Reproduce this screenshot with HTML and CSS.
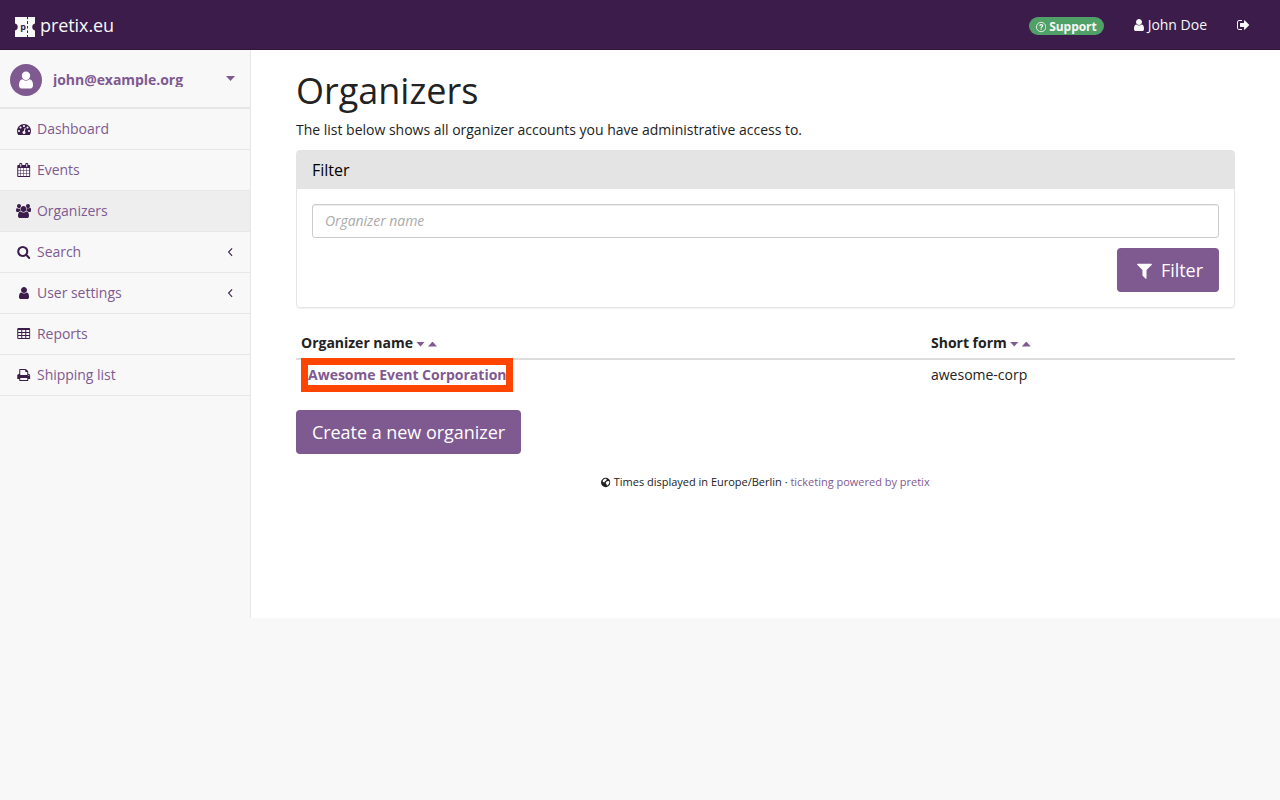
FILE: index.html
```html
<!DOCTYPE html>
<html lang="en">
<head>
<meta charset="utf-8">
<title>Organizers</title>
<link rel="stylesheet" href="styles.css">
</head>
<body>
<svg class="defs" width="0" height="0" aria-hidden="true">
  <symbol id="user" viewBox="256 0 1280 1792"><path d="M1536 1399q0 109-62.5 187t-150.5 78h-854q-88 0-150.500-78t-62.500-187q0-85 8.500-160.500t31.500-152 58.500-131 94-89 134.500-34.500q131 128 313 128t313-128q76 0 134.500 34.500t94 89 58.500 131 31.500 152 8.500 160.500zm-256-887q0 159-112.500 271.500t-271.500 112.500-271.500-112.500-112.500-271.500 112.500-271.500 271.500-112.500 271.500 112.500 112.500 271.500z"/></symbol>
  <symbol id="sign-out" viewBox="64 0 1664 1792"><path d="M704 1440q0 4 1 20t.5 26.500-3 23.500-10 19.500-20.500 6.500h-320q-119 0-203.500-84.500t-84.500-203.500v-704q0-119 84.500-203.500t203.500-84.500h320q13 0 22.500 9.500t9.500 22.500q0 4 1 20t.5 26.500-3 23.500-10 19.500-20.500 6.500h-320q-66 0-113 47t-47 113v704q0 66 47 113t113 47h312l11.500 1 11.500 3 8 5.500 7 9 2 13.500zm928-544q0 26-19 45l-544 544q-19 19-45 19t-45-19-19-45v-288h-448q-26 0-45-19t-19-45v-384q0-26 19-45t45-19h448v-288q0-26 19-45t45-19 45 19l544 544q19 19 19 45z"/></symbol>
  <symbol id="help" viewBox="0 0 1536 1792"><circle cx="768" cy="896" r="704" fill="none" stroke="currentColor" stroke-width="128"/><path d="M540 720q70-170 240-170 220 0 220 170 0 90-110 150-120 65-120 150v30" fill="none" stroke="currentColor" stroke-width="170"/><path d="M680 1130h180v190h-180z"/></symbol>
  <symbol id="dashboard" viewBox="0 0 1792 1792"><path d="M384 1152q0-53-37.500-90.500t-90.500-37.500-90.500 37.500-37.500 90.500 37.500 90.500 90.500 37.500 90.500-37.500 37.500-90.500zm192-448q0-53-37.500-90.500t-90.500-37.500-90.500 37.500-37.500 90.500 37.500 90.500 90.500 37.500 90.500-37.500 37.500-90.500zm428 481l101-382q6-26-7.500-48.500t-38.500-29.500-48 6.500-30 39.500l-101 382q-60 5-107 43.500t-63 98.500q-20 77 20 146t117 89 146-20 89-117q16-60-6-117t-72-91zm660-33q0-53-37.500-90.500t-90.500-37.500-90.500 37.500-37.500 90.500 37.500 90.500 90.500 37.500 90.500-37.500 37.500-90.500zm-640-640q0-53-37.500-90.500t-90.500-37.500-90.500 37.500-37.500 90.500 37.500 90.500 90.500 37.500 90.500-37.500 37.500-90.500zm448 192q0-53-37.500-90.500t-90.500-37.500-90.500 37.500-37.500 90.500 37.500 90.500 90.500 37.500 90.500-37.500 37.500-90.500zm320 448q0 261-141 483-19 29-54 29h-1402q-35 0-54-29-141-221-141-483 0-182 71-348t191-286 286-191 348-71 348 71 286 191 191 286 71 348z"/></symbol>
  <symbol id="calendar" viewBox="64 0 1664 1792"><path d="M192 1664h288v-288h-288v288zm352 0h320v-288h-320v288zm-352-352h288v-320h-288v320zm352 0h320v-320h-320v320zm-352-384h288v-288h-288v288zm736 736h320v-288h-320v288zm-384-736h320v-288h-320v288zm768 736h288v-288h-288v288zm-384-352h320v-320h-320v320zm-352-864v-288q0-13-9.500-22.500t-22.500-9.500h-64q-13 0-22.500 9.500t-9.500 22.500v288q0 13 9.500 22.500t22.500 9.500h64q13 0 22.500-9.500t9.500-22.500zm736 864h288v-320h-288v320zm-384-384h320v-288h-320v288zm384 0h288v-288h-288v288zm32-480v-288q0-13-9.500-22.500t-22.500-9.500h-64q-13 0-22.500 9.500t-9.500 22.500v288q0 13 9.500 22.500t22.500 9.500h64q13 0 22.500-9.500t9.500-22.500zm384-64v1280q0 52-38 90t-90 38h-1408q-52 0-90-38t-38-90v-1280q0-52 38-90t90-38h128v-96q0-66 47-113t113-47h64q66 0 113 47t47 113v96h384v-96q0-66 47-113t113-47h64q66 0 113 47t47 113v96h128q52 0 90 38t38 90z"/></symbol>
  <symbol id="group" viewBox="0 0 1920 1792"><path d="M593 896q-162 5-265 128h-134q-82 0-138-40.500t-56-118.500q0-353 124-353 6 0 43.500 21t97.500 42.500 119 21.500q67 0 133-23-5 37-5 66 0 159 81 256zm1071 637q0 120-73 189.500t-194 69.500h-874q-121 0-194-69.500t-73-189.500q0-53 3.500-103.500t14-109 26.500-108.500 43-97.500 62-81 85.500-53.500 111.500-20q10 0 43 21.500t73 48 107 48 135 21.500 135-21.500 107-48 73-48 43-21.500q61 0 111.500 20t85.500 53.500 62 81 43 97.500 26.500 108.500 14 109 3.500 103.500zm-1024-1277q0 106-75 181t-181 75-181-75-75-181 75-181 181-75 181 75 75 181zm704 384q0 159-112.500 271.500t-271.500 112.500-271.500-112.500-112.500-271.500 112.500-271.500 271.500-112.500 271.500 112.500 112.500 271.500zm576 225q0 78-56 118.500t-138 40.500h-134q-103-123-265-128 93-135 93-294 0-29-5-66 66 23 133 23 59 0 119-21.500t97.500-42.500 43.500-21q124 0 124 353zm-128-609q0 106-75 181t-181 75-181-75-75-181 75-181 181-75 181 75 75 181z"/></symbol>
  <symbol id="search" viewBox="64 0 1664 1792"><path d="M1216 832q0-185-131.500-316.500t-316.500-131.500-316.500 131.500-131.500 316.500 131.500 316.500 316.500 131.500 316.500-131.500 131.500-316.500zm512 832q0 52-38 90t-90 38q-54 0-90-38l-343-342q-179 124-399 124-143 0-273.500-55.500t-225-150-150-225-55.500-273.500 55.500-273.500 150-225 225-150 273.500-55.500 273.500 55.500 225 150 150 225 55.500 273.500q0 220-124 399l343 343q37 37 37 90z"/></symbol>
  <symbol id="table" viewBox="64 0 1664 1792"><path fill-rule="evenodd" d="M224 128h1344q160 0 160 160v1088q0 160-160 160h-1344q-160 0-160-160v-1088q0-160 160-160zM192 384v256h384v-256zM704 384v256h384v-256zM1216 384v256h384v-256zM192 768v256h384v-256zM704 768v256h384v-256zM1216 768v256h384v-256zM192 1152v256h384v-256zM704 1152v256h384v-256zM1216 1152v256h384v-256z"/></symbol>
  <symbol id="print" viewBox="64 0 1664 1792"><path d="M448 1536h896v-256h-896v256zm0-640h896v-384h-160q-40 0-68-28t-28-68v-160h-640v640zm1152 64q0-26-19-45t-45-19-45 19-19 45 19 45 45 19 45-19 19-45zm128 0v416q0 13-9.500 22.500t-22.500 9.500h-224v160q0 40-28 68t-68 28h-960q-40 0-68-28t-28-68v-160h-224q-13 0-22.500-9.500t-9.500-22.500v-416q0-79 56.500-135.500t135.500-56.500h64v-544q0-40 28-68t68-28h672q40 0 88 20t76 48l152 152q28 28 48 76t20 88v256h64q79 0 135.500 56.500t56.500 135.500z"/></symbol>
  <symbol id="angle" viewBox="0 0 14 14"><path d="M9.100 3.300 5.600 7.100l3.500 3.800" fill="none" stroke="currentColor" stroke-width="1.100"/></symbol>
  <symbol id="filter" viewBox="192 0 1408 1792"><path d="M1595 295q17 41-14 70l-493 493v742q0 42-39 59-13 5-25 5-27 0-45-19l-256-256q-19-19-19-45v-486l-493-493q-31-29-14-70 17-39 59-39h1280q42 0 59 39z"/></symbol>
  <symbol id="globe" viewBox="0 0 1536 1792"><path fill-rule="evenodd" d="M768 128a768 768 0 1 1 0 1536a768 768 0 0 1 0-1536zM640 300l230-20 60 170-120 150-160 100-120 200-140-60-120-120 60-250zM1010 700l260-60 110 180-60 260-200 260-160 60-40-230-150-160 60-200z"/></symbol>
</svg>

<nav class="topbar">
  <a class="brand">
    <svg class="logo" viewBox="0 0 20 20"><path fill="#f8f8f8" d="M0 0h20v6.500a3.600 3.600 0 0 0 0 7V20H0v-6.500a3.600 3.600 0 0 0 0-7z"/><path stroke="#3b1c4a" stroke-width="1" d="M12.500 0v2.200M12.500 4v3M12.500 9v2.500M12.500 13.500v2.500M12.500 18v2"/><text x="5.300" y="12.600" class="logo-letter">p</text></svg>
    <span>pretix.eu</span>
  </a>
  <div class="top-links">
    <a class="support"><svg class="help"><use href="#help"/></svg><span>Support</span></a>
    <a class="account"><svg class="i-user"><use href="#user"/></svg><span>John Doe</span></a>
    <a class="logout"><svg class="i-wide"><use href="#sign-out"/></svg></a>
  </div>
</nav>

<div class="wrapper">
  <aside class="sidebar">
    <div class="profile">
      <span class="avatar"><svg><use href="#user"/></svg></span>
      <span class="email">john@example.org</span>
      <span class="caret"></span>
    </div>
    <ul class="menu">
      <li><span class="fw"><svg class="i-full"><use href="#dashboard"/></svg></span><span>Dashboard</span></li>
      <li><span class="fw"><svg class="i-wide"><use href="#calendar"/></svg></span><span>Events</span></li>
      <li class="active"><span class="fw"><svg class="i-group"><use href="#group"/></svg></span><span>Organizers</span></li>
      <li><span class="fw"><svg class="i-wide"><use href="#search"/></svg></span><span>Search</span><svg class="arrow"><use href="#angle"/></svg></li>
      <li><span class="fw"><svg class="i-user"><use href="#user"/></svg></span><span>User settings</span><svg class="arrow"><use href="#angle"/></svg></li>
      <li><span class="fw"><svg class="i-wide"><use href="#table"/></svg></span><span>Reports</span></li>
      <li><span class="fw"><svg class="i-wide"><use href="#print"/></svg></span><span>Shipping list</span></li>
    </ul>
  </aside>

  <main class="content">
    <h1>Organizers</h1>
    <p class="lead">The list below shows all organizer accounts you have administrative access to.</p>
    <section class="panel">
      <h2 class="panel-heading">Filter</h2>
      <form class="panel-body">
        <input class="field" type="text" placeholder="Organizer name">
        <button class="btn btn-filter" type="button"><svg><use href="#filter"/></svg><span>Filter</span></button>
      </form>
    </section>
    <div class="table">
      <div class="row head">
        <div>Organizer name<i class="sort down"></i><i class="sort up"></i></div>
        <div>Short form<i class="sort down"></i><i class="sort up"></i></div>
      </div>
      <div class="row">
        <div><a class="highlight">Awesome Event Corporation</a></div>
        <div class="slug">awesome-corp</div>
      </div>
    </div>
    <button class="btn btn-create" type="button">Create a new organizer</button>
    <footer class="footer"><svg><use href="#globe"/></svg><span>Times displayed in Europe/Berlin · <a>ticketing powered by pretix</a></span></footer>
  </main>
</div>
</body>
</html>
```

FILE: styles.css
```css
* { box-sizing: border-box; }
body {
  margin: 0;
  background: #f8f8f8;
  color: #222;
  font: 14px/20px "Open Sans", sans-serif;
  letter-spacing: -.008px;
}
svg { fill: currentColor; flex: none; }
.defs { position: absolute; }
.i-user { width: 10px; height: 14px; }
.i-wide { width: 13px; height: 14px; }
.i-full { width: 14px; height: 14px; }
.i-group { width: 15px; height: 14px; }

.topbar {
  height: 50px;
  padding: 0 30px 0 15px;
  display: flex;
  justify-content: space-between;
  background: #3b1c4a;
  border-bottom: 1px solid #2f163b;
  color: #f8f8f8;
}
.brand { display: flex; align-items: flex-start; gap: 5px; font-size: 18px; letter-spacing: -.08px; padding-top: 15px; }
.logo { width: 20px; height: 20px; margin-top: 2px; }
.logo-letter { font: bold 9px "Open Sans", sans-serif; fill: #3b1c4a; }
.top-links { display: flex; align-items: flex-start; padding-top: 15px; }
.support {
  display: flex;
  align-items: center;
  gap: 3px;
  height: 18px;
  margin: 2px 30px 0 0;
  padding: 1px 7px 0;
  border-radius: 9px;
  background: #50a167;
  font-size: 12px;
  line-height: 17px;
  letter-spacing: -.05px;
  font-weight: 700;
}
.help { width: 10.300px; height: 12px; }
.account { display: flex; gap: 4px; margin-right: 30px; }
.account svg, .logout svg { margin-top: 3px; }
.logout { display: flex; }

.wrapper { display: flex; height: 568px; }
.sidebar { width: 251px; flex: none; border-right: 1px solid #e7e7e7; }
.profile {
  height: 59px;
  padding: 0 15px 0 10px;
  display: flex;
  align-items: center;
  border-bottom: 2px solid #e7e7e7;
  color: #7f5a91;
  font-weight: 700;
}
.avatar {
  width: 32px;
  height: 32px;
  margin: 3px 11px 0 0;
  display: flex;
  align-items: center;
  justify-content: center;
  border-radius: 50%;
  background: #7f5a91;
  color: #fff;
}
.avatar svg { width: 14px; height: 20px; margin-bottom: 1px; }
.email { flex: 1; height: 17px; line-height: 19px; letter-spacing: -.05px; overflow: hidden; }
.caret { width: 9px; height: 5px; background: #7f5a91; clip-path: polygon(0 0, 100% 0, 50% 100%); }
.menu { margin: 0; padding: 0; list-style: none; }
.menu li {
  height: 41px;
  padding: 0 13px 0 15px;
  display: flex;
  align-items: center;
  gap: 4px;
  border-bottom: 1px solid #e7e7e7;
  color: #7f5a91;
  letter-spacing: -.03px;
}
.menu li.active { background: #eee; }
.fw { width: 18px; display: flex; justify-content: center; color: #3b1c4a; }
.fw svg { margin-right: .5px; }
.fw .i-wide { width: 13.500px; }
.arrow { width: 14px; height: 14px; margin-left: auto; color: #3b1c4a; }

.content { flex: 1; padding: 21px 45px 0; background: #fff; }
h1 { margin: 0 0 9px; font-size: 36px; line-height: 40px; font-weight: 400; }
.lead { margin: 0 0 10px; }
.panel {
  height: 158px;
  margin: 0 0 20px;
  border: 1px solid #e4e4e4;
  border-radius: 4px;
  box-shadow: 0 1px 1px rgba(0, 0, 0, .05);
}
.panel-heading {
  margin: 0;
  padding: 9px 15px;
  background: #e4e4e4;
  color: #000;
  font-size: 16px;
  line-height: 20px;
  font-weight: 400;
}
.panel-body { padding: 15px; display: flex; flex-direction: column; gap: 10px; }
.field {
  width: 100%;
  height: 34px;
  padding: 5px 12px 7px;
  border: 1px solid #ccc;
  border-radius: 3px;
  box-shadow: inset 0 1px 1px rgba(0, 0, 0, .075);
  font: 14px/20px "Open Sans", sans-serif;
  letter-spacing: -.05px;
}
.field::placeholder { color: #aaa; font-style: italic; }
.btn {
  height: 44px;
  border: 0;
  border-radius: 4px;
  background: #7f5a91;
  color: #fff;
  font: 18px/24px "Open Sans", sans-serif;
  letter-spacing: -.03px;
}
.btn-filter { width: 102px; padding: 0 16px 0 20px; display: flex; align-items: center; justify-content: space-between; align-self: flex-end; }
.btn-filter svg { width: 15px; height: 19px; margin-top: 1px; }
.btn-create { width: 225px; padding: 0; }

.table { margin-bottom: 20px; }
.row { display: grid; grid-template-columns: 630px 1fr; height: 30px; padding-top: 5px; }
.row > div { padding-left: 5px; }
.row.head { height: 32px; border-bottom: 2px solid #ddd; font-weight: 700; }
.row.head > div { display: flex; align-items: center; height: 20px; }
.sort { width: 9px; height: 5px; margin: 2px 0 0 3px; background: #7f5a91; }
.sort.down { clip-path: polygon(0 0, 100% 0, 50% 100%); }
.sort.up { clip-path: polygon(0 100%, 50% 0, 100% 100%); }
.highlight {
  display: block;
  width: 212px;
  margin-top: -7px;
  border: 7px solid #ff4500;
  color: #7f5a91;
  font-weight: 700;
  white-space: nowrap;
}
.footer { display: flex; justify-content: center; gap: 3px; margin-top: 20px; font-size: 11px; line-height: 16px; }
.footer svg { width: 9.400px; height: 11px; margin-top: 3px; }
.footer a { color: #7f5a91; }
```
